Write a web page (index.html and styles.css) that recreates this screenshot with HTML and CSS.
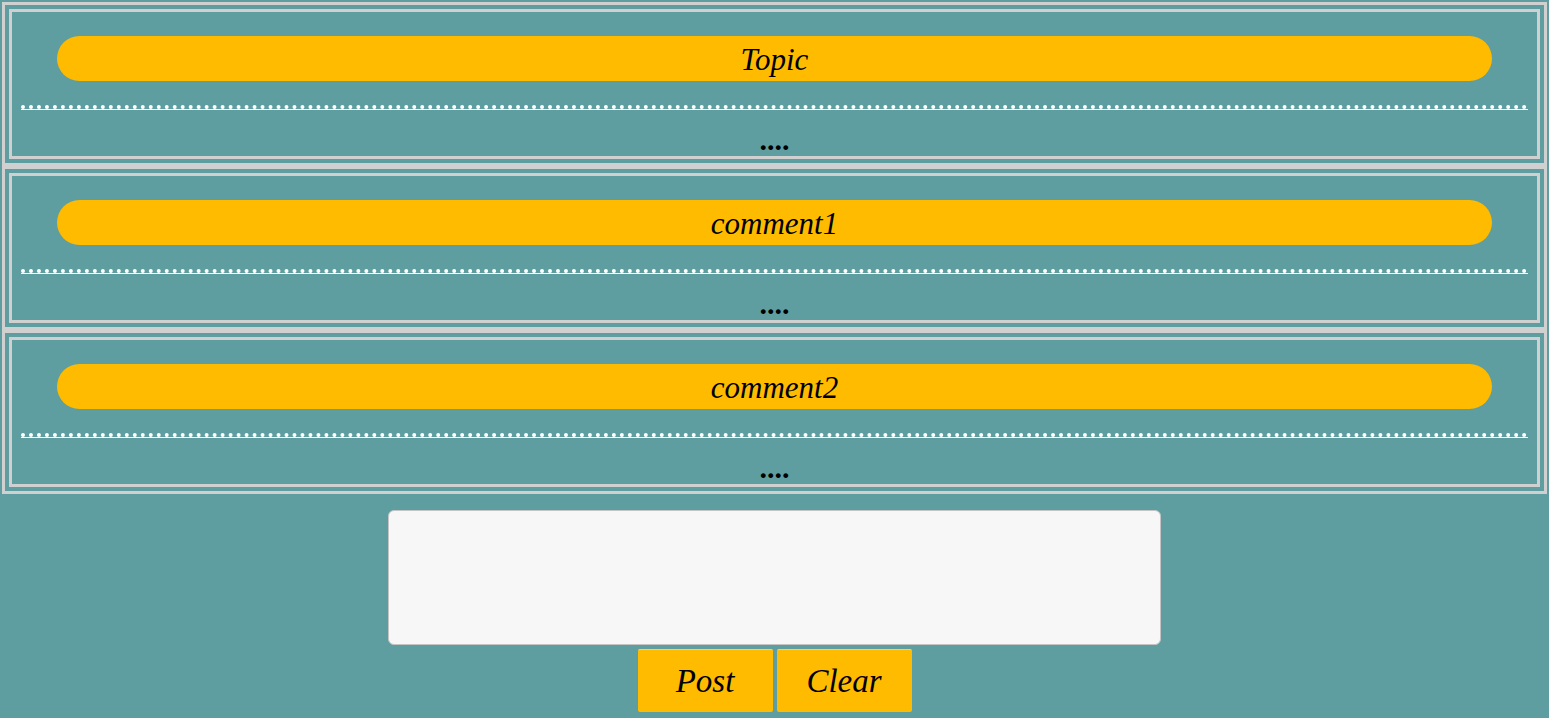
FILE: index.html
```html
<!DOCTYPE html>
<html>
<head>
<meta charset="utf-8">
<link rel="stylesheet" href="styles.css">
</head>
<body>
<div class="thread">
  <div class="post">
    <div class="post-inner">
      <div class="pill">Topic</div>
      <hr class="sep">
      <div class="body-text">....</div>
    </div>
  </div>
  <div class="post">
    <div class="post-inner">
      <div class="pill">comment1</div>
      <hr class="sep">
      <div class="body-text">....</div>
    </div>
  </div>
  <div class="post">
    <div class="post-inner">
      <div class="pill">comment2</div>
      <hr class="sep">
      <div class="body-text">....</div>
    </div>
  </div>
</div>
<div class="composer">
  <textarea class="input"></textarea>
  <div class="actions">
    <button class="btn">Post</button>
    <button class="btn">Clear</button>
  </div>
</div>
</body>
</html>
```
FILE: styles.css
```css
html, body {
  margin: 0;
  padding: 0;
}
body {
  background: #5f9ea0;
  font-family: "Liberation Serif", "DejaVu Serif", serif;
  font-style: italic;
  color: #000;
  padding: 2px 2px 0 2px;
  height: 718px;
  box-sizing: border-box;
  overflow: hidden;
}
.thread {
  display: flex;
  flex-direction: column;
}
.post {
  border: 3px solid #d0d0d0;
  padding: 4px;
}
.post-inner {
  border: 3px solid #d0d0d0;
  display: flex;
  flex-direction: column;
}
.pill {
  margin: 24px 45px 0;
  height: 45px;
  border-radius: 23px;
  background: #ffbb00;
  display: flex;
  align-items: center;
  justify-content: center;
  font-size: 31px;
  line-height: 1;
  padding-top: 2px;
  box-sizing: border-box;
}
.sep {
  margin: 24px 9px 0;
  height: 0;
  border: none;
  border-top: 4px dotted #fff;
  border-bottom: 1px solid #fff;
}
.body-text {
  height: 46px;
  box-sizing: border-box;
  text-align: center;
  font-size: 30px;
  font-style: normal;
  font-weight: bold;
  line-height: 40px;
  padding-top: 10px;
}
.composer {
  margin-top: 16px;
  display: flex;
  flex-direction: column;
  align-items: center;
  gap: 4px;
}
.input {
  width: 773px;
  height: 135px;
  box-sizing: border-box;
  border: 1px solid #c4c4c4;
  border-radius: 6px;
  background: #f7f7f7;
  resize: none;
  margin: 0;
  padding: 4px;
}
.actions {
  display: flex;
  gap: 4px;
}
.btn {
  width: 135px;
  height: 63px;
  background: #ffbb00;
  border: none;
  border-top: 1px solid #ffd14d;
  border-radius: 2px;
  font-family: "Liberation Serif", "DejaVu Serif", serif;
  font-style: italic;
  font-size: 33px;
  color: #000;
  padding: 0;
  margin: 0;
}
```
